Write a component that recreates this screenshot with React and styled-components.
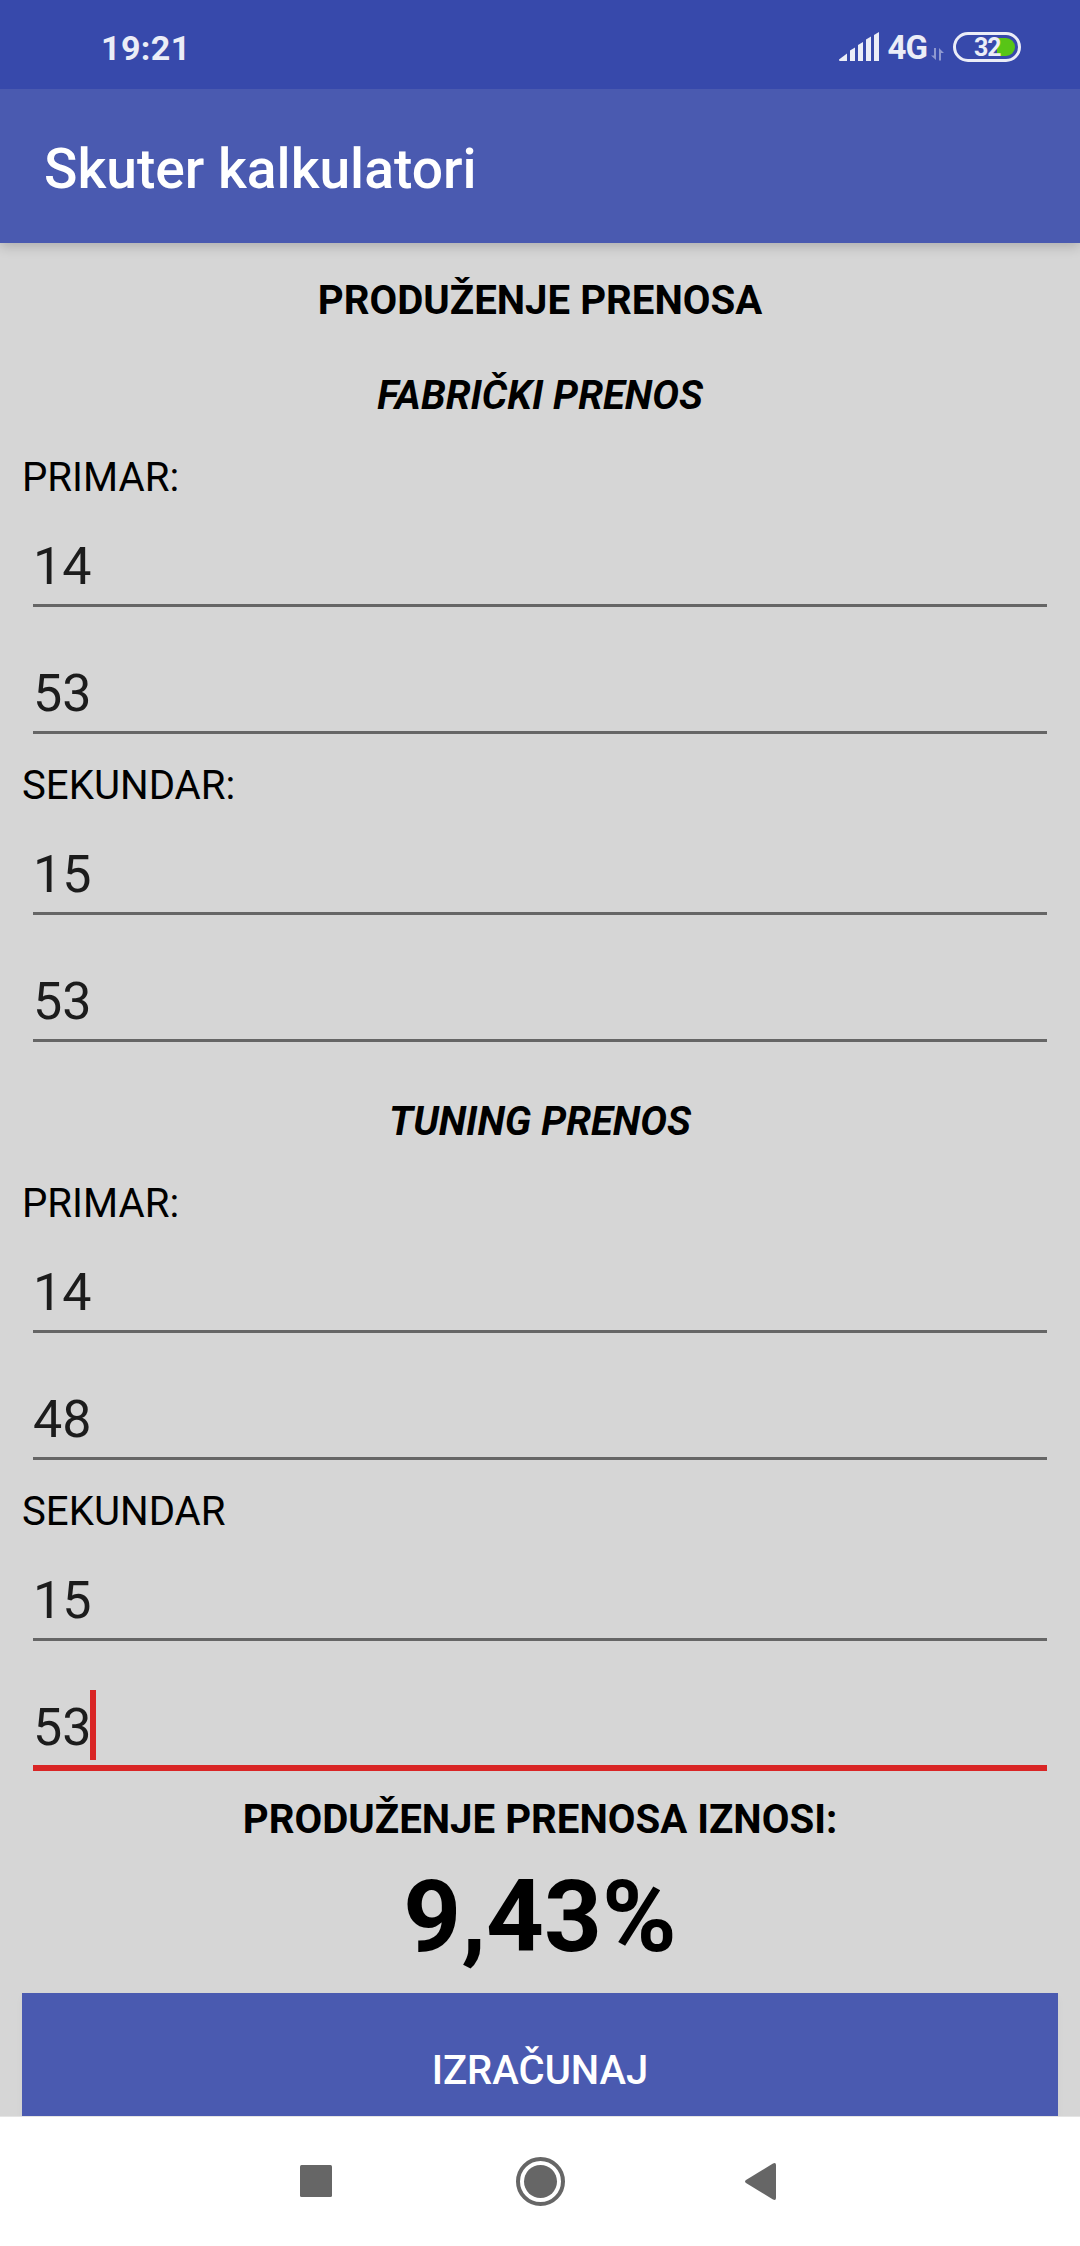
import React, { useState } from "react";
import styled, { createGlobalStyle } from "styled-components";

// ---------------- STYLED COMPONENTS ----------------

const GlobalStyle = createGlobalStyle`
  * {
    box-sizing: border-box;
  }

  body {
    margin: 0;
    background: #d6d6d6;
    font-family: Roboto, "Liberation Sans", sans-serif;
  }
`;

const Screen = styled.div`
  display: flex;
  flex-direction: column;
  width: 1080px;
  height: 2246px;
  overflow: hidden;
  background: #d6d6d6;
`;

const StatusBar = styled.div`
  position: relative;
  z-index: 1;
  display: flex;
  align-items: center;
  justify-content: space-between;
  flex: none;
  height: 89px;
  padding: 5px 59px 0 101px;
  background: #3749ab;
  color: #ebedf7;
`;

const Clock = styled.span`
  padding-top: 2px;
  font-size: 34px;
  line-height: 40px;
  font-weight: 700;
  letter-spacing: 0.4px;
`;

const StatusIcons = styled.div`
  display: flex;
  align-items: center;
`;

const Network = styled.span`
  margin-left: 8px;
  padding-top: 2px;
  font-size: 33px;
  line-height: 40px;
  font-weight: 700;
  letter-spacing: -1px;
`;

const DataArrows = styled.svg`
  margin: 14px 9px 0 4px;
`;

const Battery = styled.div`
  position: relative;
  width: 68px;
  height: 30px;
  border: 3px solid #ebedf7;
  border-radius: 15px;
`;

const BatteryLevel = styled.div`
  position: absolute;
  top: 3px;
  right: 3px;
  width: 18px;
  height: 18px;
  border-radius: 0 9px 9px 0;
  background: #58c516;
`;

const BatteryText = styled.span`
  position: absolute;
  top: 1px;
  left: 18px;
  font-size: 25px;
  line-height: 24px;
  font-weight: 700;
  letter-spacing: -1.2px;
`;

const Toolbar = styled.header`
  position: relative;
  display: flex;
  align-items: center;
  flex: none;
  height: 154px;
  padding: 6px 44px 0;
  background: #4a5ab0;
  box-shadow: 0 3px 12px rgba(0, 0, 0, 0.2);
`;

const Title = styled.h1`
  margin: 0;
  color: #fff;
  font-size: 55.2px;
  line-height: 64px;
  font-weight: 500;
`;

const Content = styled.main`
  flex: 1;
  min-height: 0;
  overflow: hidden;
  padding: 30px 22px 0;
  color: #000;
`;

const Heading = styled.h2`
  margin: 0;
  padding-top: 2px;
  font-size: 40.2px;
  line-height: 52px;
  font-weight: 700;
  text-align: center;
`;

const SectionTitle = styled(Heading)`
  margin-top: ${(props) => (props.$first ? "41px" : "28px")};
  margin-bottom: 28px;
  font-size: 40px;
  font-style: italic;
`;

const Label = styled.div`
  padding-top: 2px;
  font-size: 40.2px;
  line-height: 52px;
`;

const Field = styled.div`
  position: relative;
  height: 127px;
  padding: 31px 11px 0;
`;

const Input = styled.input`
  display: block;
  width: 100%;
  height: ${(props) => (props.$active ? "75px" : "72px")};
  padding: 0 0 7px;
  border: 0;
  border-bottom: ${(props) => (props.$active ? "6px solid #d92525" : "3px solid #666")};
  border-radius: 0;
  outline: none;
  background: transparent;
  color: #1c1c1c;
  font-family: inherit;
  font-size: 52px;
  line-height: 62px;
`;

const Caret = styled.span`
  position: absolute;
  top: 25px;
  left: 68px;
  width: 6px;
  height: 70px;
  background: #d92525;
`;

const Result = styled.div`
  margin-bottom: 5px;
  font-size: 101px;
  line-height: 142px;
  font-weight: 700;
  text-align: center;
`;

const Button = styled.button`
  display: block;
  width: 100%;
  height: 154px;
  padding: 52px 0 50px;
  border: 0;
  background: #4a5ab0;
  box-shadow: 0 4px 8px rgba(0, 0, 0, 0.03);
  color: #fff;
  font-family: inherit;
  font-size: 40px;
  line-height: 52px;
  font-weight: 500;
`;

const NavBar = styled.nav`
  position: relative;
  display: grid;
  grid-template-columns: repeat(3, 224px);
  justify-content: center;
  justify-items: center;
  flex: none;
  height: 130px;
  padding-top: 39px;
  border-top: 1px solid #e4e4e4;
  background: #fff;
`;

const NavIcon = styled.svg`
  width: 50px;
  height: 50px;
  fill: #666;
`;

// ---------------- CALCULATION ----------------

const ratio = ([a, b, c, d]) => (b / a) * (d / c);

const extension = (stock, tuning) => {
  const value = (1 - ratio(tuning) / ratio(stock)) * 100;
  return Number.isFinite(value) ? `${value.toFixed(2).replace(".", ",")}%` : "";
};

const NumberField = ({ value, active, onChange }) => (
  <Field>
    <Input
      type="text"
      inputMode="numeric"
      value={value}
      $active={active}
      onChange={(e) => onChange(e.target.value)}
    />
    {active && <Caret />}
  </Field>
);

const Gears = ({ title, first, labels, values, setValues, activeIndex }) => {
  const field = (index) => (
    <NumberField
      value={values[index]}
      active={activeIndex === index}
      onChange={(value) => setValues(values.map((v, i) => (i === index ? value : v)))}
    />
  );

  return (
    <section>
      <SectionTitle $first={first}>{title}</SectionTitle>
      <Label>{labels[0]}</Label>
      {field(0)}
      {field(1)}
      <Label>{labels[1]}</Label>
      {field(2)}
      {field(3)}
    </section>
  );
};

const App = () => {
  const [stock, setStock] = useState(["14", "53", "15", "53"]);
  const [tuning, setTuning] = useState(["14", "48", "15", "53"]);
  const [result, setResult] = useState(extension(stock, tuning));

  return (
    <>
      <GlobalStyle />
      <Screen>
        <StatusBar>
          <Clock>19:21</Clock>
          <StatusIcons>
            <svg width="41" height="30" viewBox="0 0 41 30" fill="#ebedf7">
              <path d="M0 27.5L8 21.5V29H1Q0 29 0 28Z" />
              <path d="M11 18.5L16 15.5V29H11Z" />
              <path d="M19 13L24 10V29H19Z" />
              <path d="M27 7.5L32 4.5V29H27Z" />
              <path d="M35 3L40 0V29H35Z" />
            </svg>
            <Network>4G</Network>
            <DataArrows width="13" height="13" viewBox="0 0 13 13" fill="#8e98d0">
              <path d="M3 0H5V12L0 7.5H3Z" />
              <path d="M8 12.5H10V5H13L8 0Z" />
            </DataArrows>
            <Battery>
              <BatteryLevel />
              <BatteryText>32</BatteryText>
            </Battery>
          </StatusIcons>
        </StatusBar>

        <Toolbar>
          <Title>Skuter kalkulatori</Title>
        </Toolbar>

        <Content>
          <Heading>PRODUŽENJE PRENOSA</Heading>
          <Gears
            title="FABRIČKI PRENOS"
            first
            labels={["PRIMAR:", "SEKUNDAR:"]}
            values={stock}
            setValues={setStock}
          />
          <Gears
            title="TUNING PRENOS"
            labels={["PRIMAR:", "SEKUNDAR"]}
            values={tuning}
            setValues={setTuning}
            activeIndex={3}
          />
          <Heading>PRODUŽENJE PRENOSA IZNOSI:</Heading>
          <Result>{result}</Result>
          <Button onClick={() => setResult(extension(stock, tuning))}>IZRAČUNAJ</Button>
        </Content>

        <NavBar>
          <NavIcon viewBox="0 0 50 50">
            <rect x="9" y="9" width="32" height="32" rx="1.5" />
          </NavIcon>
          <NavIcon viewBox="0 0 50 50">
            <circle cx="25.5" cy="25.5" r="22.5" fill="none" stroke="#666" strokeWidth="4" />
            <circle cx="25.5" cy="25.5" r="16.5" />
          </NavIcon>
          <NavIcon viewBox="0 0 50 50">
            <path d="M7 24L34 7.4Q37 6 37 9V42Q37 45 34 43.6L7 27Q5 25.500 7 24Z" />
          </NavIcon>
        </NavBar>
      </Screen>
    </>
  );
};

export default App;
